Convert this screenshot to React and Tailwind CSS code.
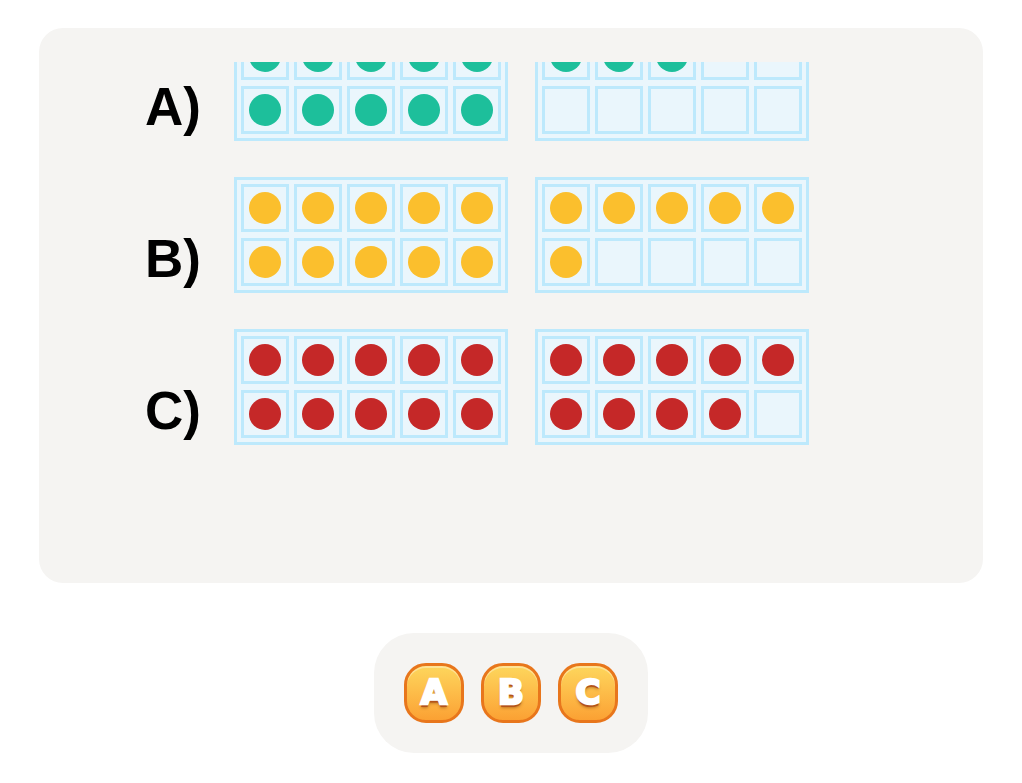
import React from 'react';

const rows = [
  { label: 'A)', color: 'bg-[#1dbf9b]', counts: [10, 3] },
  { label: 'B)', color: 'bg-[#fbbf2d]', counts: [10, 6] },
  { label: 'C)', color: 'bg-[#c52828]', counts: [10, 9] },
];

function TenFrame({ filled, color }) {
  return (
    <div className="grid grid-cols-5 gap-x-[5px] gap-y-[6px] border-[3px] border-[#bde9fc] bg-[#eaf6fc] p-[4px]">
      {Array.from({ length: 10 }).map((_, i) => (
        <div
          key={i}
          className="flex h-[48px] w-[48px] items-center justify-center border-[3px] border-[#bde9fc] bg-[#eaf6fc]"
        >
          {i < filled && <div className={`h-8 w-8 rounded-full ${color}`} />}
        </div>
      ))}
    </div>
  );
}

function AnswerButton({ letter }) {
  return (
    <button className="flex h-[60px] w-[60px] items-center justify-center rounded-[22px] border-[3px] border-[#e8761c] bg-linear-to-b from-[#fdd65c] to-[#fba133] shadow-[inset_0_2px_0_rgba(255,255,255,0.35)]">
      <span className="-mt-[2px] text-[34px] font-black leading-none text-white [-webkit-text-stroke:2.5px_white] [font-family:'DejaVu_Sans',sans-serif] [text-shadow:0_3px_0_#b4531a,0_4px_3px_rgba(120,50,0,0.45)]">
        {letter}
      </span>
    </button>
  );
}

export default function App() {
  return (
    <div className="flex min-h-screen flex-col items-center bg-white px-[39px] pt-[28px] [font-family:'Liberation_Sans',Arial,sans-serif]">
      <div className="flex h-[555px] w-full flex-col rounded-3xl bg-[#f5f4f2] pt-[34px]">
        <div className="flex-1 overflow-hidden">
          <div className="-mt-[37px] flex flex-col gap-[36px] pl-[106px]">
            {rows.map((row) => (
              <div key={row.label} className="flex items-start">
                <div className="mt-[55px] w-[89px] text-[53px] font-bold leading-none text-black">
                  {row.label}
                </div>
                <div className="flex gap-[27px]">
                  <TenFrame filled={row.counts[0]} color={row.color} />
                  <TenFrame filled={row.counts[1]} color={row.color} />
                </div>
              </div>
            ))}
          </div>
        </div>
      </div>

      <div className="mt-[50px] flex gap-[17px] rounded-[40px] bg-[#f5f4f2] p-[30px]">
        <AnswerButton letter="A" />
        <AnswerButton letter="B" />
        <AnswerButton letter="C" />
      </div>
    </div>
  );
}
